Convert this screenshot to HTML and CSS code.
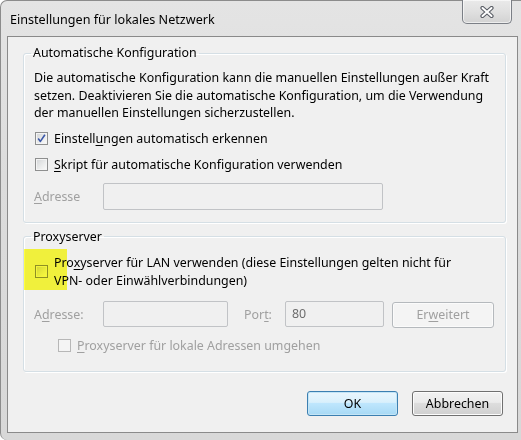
FILE: index.html
```html
<!DOCTYPE html>
<html lang="de">
<head>
<meta charset="utf-8">
<title>Einstellungen für lokales Netzwerk</title>
<link rel="stylesheet" href="styles.css">
</head>
<body>
<div class="window">
  <div class="titlebar">
    <span class="title">Einstellungen für lokales Netzwerk</span>
    <button class="close" aria-label="Schließen">
      <svg width="16" height="12" viewBox="0 0 16 12">
        <path d="M3.5 2 L12.5 10 M12.5 2 L3.5 10" stroke="#5a5e66" stroke-width="4.2" stroke-linecap="round" fill="none"/>
        <path d="M3.5 2 L12.5 10 M12.5 2 L3.5 10" stroke="#ffffff" stroke-width="2" stroke-linecap="round" fill="none"/>
      </svg>
    </button>
  </div>
  <div class="frame">
    <div class="client">
      <fieldset class="group g1">
        <legend>Automatische Konfiguration</legend>
        <p class="desc">Die automatische Konfiguration kann die manuellen Einstellungen außer Kraft<br>setzen. Deaktivieren Sie die automatische Konfiguration, um die Verwendung<br>der manuellen Einstellungen sicherzustellen.</p>
        <div class="check r1">
          <span class="box">
            <svg width="11" height="11" viewBox="0 0 11 11"><path d="M2.2 5.6 L4.4 8.4 L8.9 1.8" stroke="#3c58a8" stroke-width="1.6" fill="none" stroke-linejoin="round"/></svg>
          </span>
          <span>Einstell<u>u</u>ngen automatisch erkennen</span>
        </div>
        <div class="check r2">
          <span class="box"></span>
          <span><u>S</u>kript für automatische Konfiguration verwenden</span>
        </div>
        <div class="addr">
          <span class="lbl dis"><u>A</u>dresse</span>
          <span class="input wide"></span>
        </div>
      </fieldset>
      <fieldset class="group g2">
        <legend>Proxyserver</legend>
        <div class="check proxy">
          <span class="box"></span>
          <span class="two">Pro<u>x</u>yserver für LAN verwenden (diese Einstellungen gelten nicht für<br>VPN- oder Einwählverbindungen)</span>
          <span class="hl"></span>
        </div>
        <div class="prow">
          <span class="lbl dis">A<u>d</u>resse:</span>
          <span class="input addr2"></span>
          <span class="plbl dis">Por<u>t</u>:</span>
          <span class="input port">80</span>
          <span class="btn ext dis">Er<u>w</u>eitert</span>
        </div>
        <div class="check sub">
          <span class="box disbox"></span>
          <span class="dis"><u>P</u>roxyserver für lokale Adressen umgehen</span>
        </div>
      </fieldset>
      <div class="buttons">
        <button class="btn ok">OK</button>
        <button class="btn cancel">Abbrechen</button>
      </div>
    </div>
  </div>
</div>
</body>
</html>
```
FILE: styles.css
```css
* { box-sizing: border-box; }
html, body { margin: 0; padding: 0; }
body {
  width: 521px;
  height: 440px;
  overflow: hidden;
  background: #ffffff;
  font-family: "Noto Sans", "Open Sans", sans-serif;
  font-size: 12.4px;
  color: #000;
}
.window {
  width: 521px;
  height: 440px;
  display: flex;
  flex-direction: column;
  border-left: 1px solid #8c8c8c;
  border-top: 1px solid #8c8c8c;
  border-radius: 7px 0 0 7px;
  background: linear-gradient(180deg, #e4e4e4 0%, #dcdcdc 40%, #d8d8d8 100%);
}
.titlebar {
  height: 35px;
  display: flex;
  justify-content: space-between;
  align-items: flex-start;
  padding-left: 9px;
}
.title {
  font-size: 12.6px;
  line-height: 20px;
  margin-top: 9px;
}
.close {
  width: 50px;
  height: 24px;
  margin: -1px 9px 0 0;
  padding: 0;
  border: 1px solid #7b7f86;
  border-top: none;
  border-radius: 0 0 5px 5px;
  background: linear-gradient(180deg, #eaeaea 0%, #e0e0e0 50%, #d2d2d2 100%);
  box-shadow: inset 0 0 0 1px rgba(255,255,255,0.6);
  display: flex;
  align-items: center;
  justify-content: center;
}
.frame {
  flex: 1;
  min-height: 0;
  padding: 0 3px 7px 6px;
  display: flex;
}
.client {
  flex: 1;
  min-width: 0;
  border: 1px solid #8a8a8a;
  background: #f0f0f0;
  padding: 7px 11px 0 15px;
  display: flex;
  flex-direction: column;
}
.group {
  margin: 0;
  padding: 0 10px 12px 10px;
  border: 1px solid #d5dfe5;
  border-radius: 3px;
  box-shadow: inset 1px 1px 0 #fff, 1px 1px 0 #fff;
  min-width: 0;
}
.group legend {
  padding: 0 2px;
  margin-left: -3px;
  line-height: 18px;
}
.g1 { padding-top: 7px; }
.desc {
  margin: 0;
  line-height: 17.5px;
  white-space: nowrap;
}
.check {
  display: flex;
  align-items: center;
  gap: 6px;
  line-height: 18px;
  white-space: nowrap;
  position: relative;
}
.check .box {
  width: 13px;
  height: 13px;
  margin-left: 1px;
  flex: none;
  border: 1px solid #8e8f8f;
  background: linear-gradient(135deg, #d2d4d6 0%, #eceded 60%, #fbfbfb 100%);
  box-shadow: inset 0 0 0 1px #f4f4f4;
  display: flex;
  align-items: center;
  justify-content: center;
}
.check .box.disbox {
  border-color: #b7b7b7;
  background: #f4f4f4;
}
.r1 { margin-top: 8px; }
.r2 { margin-top: 8px; }
.addr {
  margin-top: 9px;
  display: flex;
  align-items: center;
}
.lbl { width: 69px; flex: none; }
.dis { color: #a0a0a0; }
.input {
  display: block;
  height: 27px;
  border: 1px solid #c1c3c6;
  border-radius: 2px;
  background: #f0f0f0;
  flex: none;
}
.input.wide { width: 280px; }
.g2 { margin-top: 5px; padding-top: 8px; padding-bottom: 16px; }
.proxy { align-items: center; }
.proxy .two { line-height: 18px; }
.hl {
  position: absolute;
  left: -10px;
  top: -5px;
  width: 43px;
  height: 41px;
  background: #ffff40;
  mix-blend-mode: multiply;
}
.prow {
  margin-top: 11px;
  display: flex;
  align-items: center;
}
.prow .input { height: 26px; }
.addr2 { width: 125px; }
.plbl { margin-left: 16px; width: 41px; }
.port {
  width: 99px;
  color: #6d6d6d;
  padding-left: 6px;
  line-height: 24px;
}
.btn {
  font-family: inherit;
  font-size: 12.4px;
  height: 25px;
  border-radius: 3px;
  display: flex;
  align-items: center;
  justify-content: center;
  padding: 0;
}
.ext {
  margin-left: 8px;
  width: 102px;
  height: 26px;
  margin-top: 1px;
  border: 1px solid #b5b9bd;
  background: #f4f4f4;
  box-shadow: inset 0 0 0 1px #fbfbfb;
}
.sub { margin-top: 9px; margin-left: 23px; }
.buttons {
  margin-top: 19px;
  display: flex;
  justify-content: flex-end;
  gap: 14px;
  padding-right: 3px;
}
.buttons .btn { width: 91px; color: #000; }
.ok {
  border: 1px solid #3c7fb1;
  background: linear-gradient(180deg, #eaf6fd 0%, #d9f0fc 45%, #bee6fd 50%, #a7d9f5 100%);
  box-shadow: inset 0 0 0 1px #c4e5f6;
}
.cancel {
  border: 1px solid #707070;
  background: linear-gradient(180deg, #f2f2f2 0%, #ebebeb 45%, #dddddd 50%, #cfcfcf 100%);
  box-shadow: inset 0 0 0 1px #fcfcfc;
}
u { text-decoration-thickness: 1px; text-underline-offset: 2px; }
```
